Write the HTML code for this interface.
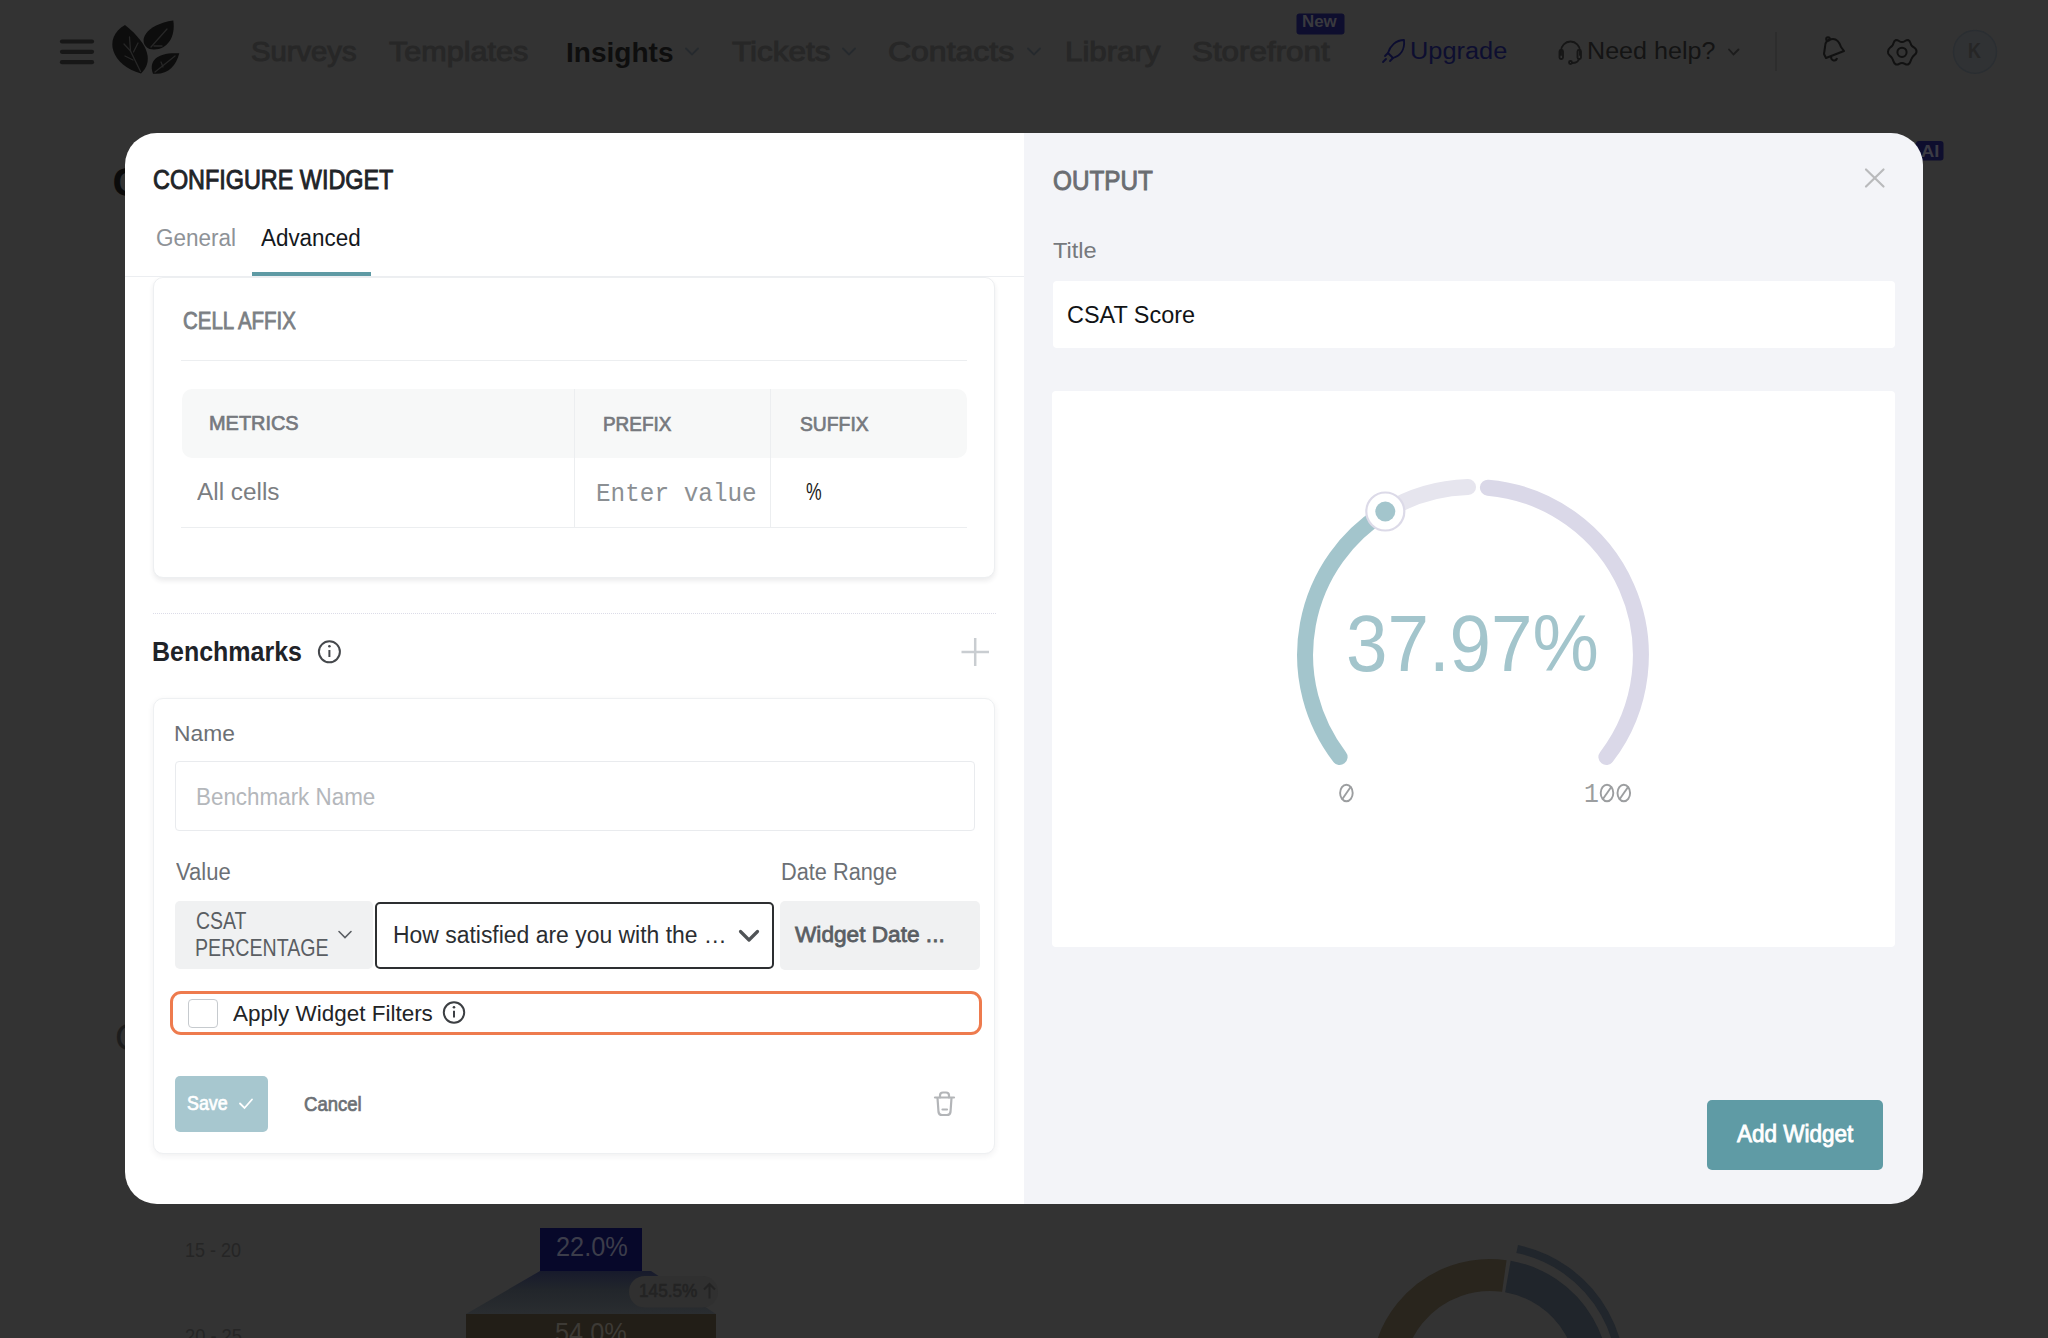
<!DOCTYPE html>
<html><head><meta charset="utf-8">
<style>
html,body{margin:0;padding:0;}
body{width:2048px;height:1338px;overflow:hidden;background:#333333;position:relative;font-family:"Liberation Sans",sans-serif;}
.a{position:absolute;box-sizing:border-box;}
.t{position:absolute;white-space:pre;line-height:1;transform-origin:0 0;}
svg{position:absolute;left:0;top:0;overflow:visible;}
</style></head><body>
<!-- background page (dimmed) -->
<svg width="2048" height="1338" viewBox="0 0 2048 1338">
  <!-- hamburger -->
  <g stroke="#171717" stroke-width="4.2" stroke-linecap="round">
    <line x1="62" y1="41.5" x2="92" y2="41.5"/>
    <line x1="62" y1="51.8" x2="92" y2="51.8"/>
    <line x1="62" y1="62.2" x2="92" y2="62.2"/>
  </g>
  <!-- logo leaves -->
  <g fill="#0d0d0d">
    <path d="M141 73.5 C112 66 102 38 125 25 C150 45 153 62 141 73.5Z"/>
    <path d="M149.5 49 C136 42 146 24 173.3 20.4 C176 38 166 52 149.5 49Z"/>
    <path d="M153 73.7 C148 60 158 52 179.3 53.3 C176 66 168 75 153 73.7Z"/>
  </g>
  <g stroke="#272727" stroke-width="1.3" fill="none" stroke-linecap="round">
    <path d="M140.5 71.5 L130.5 51 L129.5 37"/>
    <path d="M124 44 L130.5 51 M125 56 L133 60 M138 43 L133.5 52"/>
    <path d="M151 47 L167 29 M154 46 L162 46"/>
    <path d="M155 72 L175 56 M161 62 L163 67"/>
  </g>
  <!-- chevrons -->
  <g stroke="#262a2e" stroke-width="1.8" fill="none" stroke-linecap="round">
    <path d="M686 48.5 L692 54.5 L698 48.5"/>
    <path d="M843 48.5 L849 54.5 L855 48.5"/>
    <path d="M1028 48.5 L1034 54.5 L1040 48.5"/>
  </g>
  <path d="M1729 49.5 L1733.5 54.5 L1738.5 49.5" stroke="#1c1c1c" stroke-width="1.8" fill="none" stroke-linecap="round"/>
  <!-- new badge -->
  <rect x="1296.5" y="13.5" width="48" height="21" rx="3" fill="#0e0e2e"/>
  <!-- rocket -->
  <g stroke="#0c0d30" stroke-width="1.8" fill="none" stroke-linecap="round" stroke-linejoin="round">
    <path d="M1404 40 C1396 40 1390 46 1388 53 L1393 58 C1400 56 1405 50 1404 40Z"/>
    <path d="M1388 53 L1385 56 M1393 58 L1390 61 M1386 59 L1383 62"/>
  </g>
  <!-- headset -->
  <g stroke="#161616" stroke-width="1.8" fill="none" stroke-linecap="round">
    <path d="M1561 55 L1561 51 A9.5 9.5 0 0 1 1580 51 L1580 55"/>
    <rect x="1559.5" y="50" width="3.5" height="9" rx="1.5"/>
    <rect x="1577.5" y="50" width="3.5" height="9" rx="1.5"/>
    <path d="M1579 59 Q1578 63 1572 63"/>
    <circle cx="1570.5" cy="62.5" r="1.5"/>
  </g>
  <!-- divider -->
  <line x1="1776" y1="32" x2="1776" y2="71" stroke="#2b2b2b" stroke-width="1.2"/>
  <!-- bell -->
  <g stroke="#111111" stroke-width="2" fill="none" stroke-linejoin="round">
    <path d="M1826 58 L1844 51 L1841 47 C1839 41 1836 39 1833 39 C1829 39 1825 41 1825 47 L1824 54 Z"/>
    <path d="M1831 56.5 C1831 61 1836 62 1837 58"/>
    <circle cx="1828" cy="39" r="1.8"/>
  </g>
  <!-- gear -->
  <g stroke="#111111" stroke-width="2" fill="none">
    <path d="M1896 40 C1899 40 1899 42 1902 42 C1905 42 1905 40 1908 40 C1911 41 1910 44 1912 46 C1914 48 1917 48 1916.5 52 C1916 55 1913 55 1912 58 C1910 61 1911 63 1908 64.5 C1905 65 1905 63 1902 63 C1899 63 1899 65 1896 64.5 C1893 63 1894 61 1892 58 C1890 55 1887.5 55 1888 52 C1888 48 1890 48 1892 46 C1894 44 1893 41 1896 40Z"/>
    <circle cx="1902" cy="52.3" r="4.6"/>
  </g>
  <!-- avatar -->
  <circle cx="1975" cy="51.8" r="21.5" fill="#303234" stroke="#2a2e32" stroke-width="1.3"/>
  <!-- AI badge -->
  <rect x="1916" y="141" width="27.5" height="19.5" rx="3" fill="#0e0e2e"/>
  <!-- funnel -->
  <rect x="540" y="1228" width="102" height="43" fill="#07082a"/>
  <defs>
    <linearGradient id="trap" x1="0" y1="0" x2="0" y2="1">
      <stop offset="0" stop-color="#171a2c"/>
      <stop offset="0.45" stop-color="#22262b"/>
      <stop offset="1" stop-color="#2a2d30"/>
    </linearGradient>
  </defs>
  <path d="M540 1271 L651 1271 L716 1314 L466 1314 Z" fill="url(#trap)"/>
  <rect x="629" y="1276" width="89" height="31.5" rx="15.7" fill="#303030"/>
  <path d="M709.5 1298.5 L709.5 1284 M704 1289.5 L709.5 1284 L715 1289.5" stroke="#232323" stroke-width="2" fill="none"/>
  <rect x="466" y="1314" width="250" height="30" fill="#221e17"/>
  <!-- donut -->
  <path d="M1393.2 1413.2 A103 103 0 0 1 1504.3 1276" stroke="#29251d" stroke-width="32" fill="none"/>
  <path d="M1507.9 1276.5 A103 103 0 0 1 1586.8 1413.2" stroke="#20252b" stroke-width="32" fill="none"/>
  <path d="M1517.2 1249 A131 131 0 0 1 1613.1 1422.8" stroke="#21262c" stroke-width="8" fill="none"/>
</svg>

<div class="t" style="left:251.47px;top:37.48px;font-family:'Liberation Sans', sans-serif;font-weight:400;font-size:28.261px;-webkit-text-stroke:0.989px currentColor;color:#272727;transform:scaleX(1.0347)">Surveys</div>
<div class="t" style="left:388.50px;top:37.48px;font-family:'Liberation Sans', sans-serif;font-weight:400;font-size:28.261px;-webkit-text-stroke:0.989px currentColor;color:#272727;transform:scaleX(1.0814)">Templates</div>
<div class="t" style="left:566.21px;top:37.68px;font-family:'Liberation Sans', sans-serif;font-weight:700;font-size:28.261px;color:#0e0e0e;transform:scaleX(0.9933)">Insights</div>
<div class="t" style="left:732.00px;top:37.48px;font-family:'Liberation Sans', sans-serif;font-weight:400;font-size:28.261px;-webkit-text-stroke:0.989px currentColor;color:#272727;transform:scaleX(1.1136)">Tickets</div>
<div class="t" style="left:887.87px;top:37.48px;font-family:'Liberation Sans', sans-serif;font-weight:400;font-size:28.261px;-webkit-text-stroke:0.989px currentColor;color:#272727;transform:scaleX(1.1318)">Contacts</div>
<div class="t" style="left:1064.79px;top:37.48px;font-family:'Liberation Sans', sans-serif;font-weight:400;font-size:28.261px;-webkit-text-stroke:0.989px currentColor;color:#272727;transform:scaleX(1.1059)">Library</div>
<div class="t" style="left:1192.29px;top:37.48px;font-family:'Liberation Sans', sans-serif;font-weight:400;font-size:28.261px;-webkit-text-stroke:0.989px currentColor;color:#272727;transform:scaleX(1.1097)">Storefront</div>
<div class="t" style="left:1302.49px;top:14.43px;font-family:'Liberation Sans', sans-serif;font-weight:700;font-size:16.667px;color:#3a3a3e;transform:scaleX(1.0147)">New</div>
<div class="t" style="left:1409.94px;top:38.56px;font-family:'Liberation Sans', sans-serif;font-weight:400;font-size:24.638px;color:#0d0e30;transform:scaleX(1.0293)">Upgrade</div>
<div class="t" style="left:1586.90px;top:39.07px;font-family:'Liberation Sans', sans-serif;font-weight:400;font-size:23.913px;color:#141414;transform:scaleX(1.0500)">Need help?</div>
<div class="t" style="left:1968.20px;top:39.91px;font-family:'Liberation Sans', sans-serif;font-weight:700;font-size:22.464px;color:#262626;transform:scaleX(0.8000)">K</div>
<div class="t" style="left:112.40px;top:161.71px;font-family:'Liberation Sans', sans-serif;font-weight:700;font-size:40.580px;color:#0b0b0b;transform:scaleX(1.0000)">C</div>
<div class="t" style="left:114.90px;top:1018.77px;font-family:'Liberation Sans', sans-serif;font-weight:400;font-size:37.681px;color:#1d1d1d;transform:scaleX(1.0000)">C</div>
<div class="t" style="left:1921.00px;top:142.72px;font-family:'Liberation Sans', sans-serif;font-weight:700;font-size:17.391px;color:#3b3b44;transform:scaleX(1.0588)">AI</div>
<div class="t" style="left:184.78px;top:1240.87px;font-family:'Liberation Sans', sans-serif;font-weight:400;font-size:19.565px;color:#252525;transform:scaleX(0.9200)">15 - 20</div>
<div class="t" style="left:184.76px;top:1326.87px;font-family:'Liberation Sans', sans-serif;font-weight:400;font-size:19.565px;color:#252525;transform:scaleX(0.9356)">20 - 25</div>
<div class="t" style="left:555.68px;top:1232.59px;font-family:'Liberation Sans', sans-serif;font-weight:400;font-size:27.536px;color:#3c3d4a;transform:scaleX(0.9211)">22.0%</div>
<div class="t" style="left:555.08px;top:1318.59px;font-family:'Liberation Sans', sans-serif;font-weight:400;font-size:27.536px;color:#3d3a35;transform:scaleX(0.9211)">54.0%</div>
<div class="t" style="left:639.05px;top:1282.10px;font-family:'Liberation Sans', sans-serif;font-weight:400;font-size:18.116px;-webkit-text-stroke:0.634px currentColor;color:#232323;transform:scaleX(0.9500)">145.5%</div>
<!-- MODAL -->
<div class="a" style="left:125px;top:133px;width:899px;height:1071px;background:#ffffff;border-radius:32px 0 0 32px;"></div>
<div class="a" style="left:1024px;top:133px;width:898.5px;height:1071px;background:#f3f4f8;border-radius:0 32px 32px 0;"></div>

<!-- tabs -->
<div class="a" style="left:125px;top:276px;width:899px;height:1.2px;background:#eceef1;"></div>
<div class="a" style="left:252px;top:272px;width:119px;height:4px;background:#5e9aa4;"></div>

<!-- scroll area -->
<div class="a" style="left:125px;top:277px;width:899px;height:927px;overflow:hidden;">
  <!-- cell affix card -->
  <div class="a" style="left:28px;top:0px;width:842px;height:300.5px;border:1.2px solid #edeff1;border-radius:10px;box-shadow:0 3px 5px rgba(40,40,60,0.09);background:#fff;"></div>
  <div class="a" style="left:56px;top:82.5px;width:786px;height:1.2px;background:#eceef0;"></div>
  <div class="a" style="left:57px;top:112px;width:785px;height:69px;background:#f7f8f8;border-radius:10px;"></div>
  <div class="a" style="left:449px;top:112px;width:1.2px;height:139px;background:#eceef0;"></div>
  <div class="a" style="left:645px;top:112px;width:1.2px;height:139px;background:#eceef0;"></div>
  <div class="a" style="left:56px;top:250px;width:786px;height:1.2px;background:#eceef0;"></div>
  <!-- dotted divider -->
  <div class="a" style="left:28px;top:336px;width:843px;height:0;border-top:1.5px dotted #dcdce8;"></div>
  <!-- benchmark card -->
  <div class="a" style="left:28px;top:421px;width:842px;height:456px;border:1.2px solid #eef0f2;border-radius:10px;box-shadow:0 2px 6px rgba(40,40,60,0.07);background:#fff;"></div>
  <!-- name input -->
  <div class="a" style="left:50px;top:484px;width:800px;height:69.5px;border:1.2px solid #e9ebee;border-radius:4px;"></div>
  <!-- csat select -->
  <div class="a" style="left:50px;top:624px;width:198px;height:68px;background:#f0f1f2;border-radius:5px;"></div>
  <!-- how satisfied -->
  <div class="a" style="left:249.5px;top:624.5px;width:399px;height:67px;border:2px solid #2d2f31;border-radius:5px;background:#fff;"></div>
  <!-- widget date -->
  <div class="a" style="left:655px;top:624px;width:199.5px;height:68.5px;background:#f0f1f2;border-radius:5px;"></div>
  <!-- orange -->
  <div class="a" style="left:44.5px;top:713.5px;width:812px;height:44.5px;border:3.5px solid #ee7b4e;border-radius:11px;"></div>
  <div class="a" style="left:63px;top:722px;width:29.5px;height:29px;border:1.2px solid #c6cace;border-radius:4px;background:#fff;"></div>
  <!-- save -->
  <div class="a" style="left:50px;top:799px;width:93px;height:55.5px;background:#a7c7cf;border-radius:5px;"></div>
</div>

<svg width="2048" height="1338" viewBox="0 0 2048 1338">
  <!-- info icons -->
  <g stroke="#45484c" stroke-width="2" fill="none">
    <circle cx="329.4" cy="651.8" r="10.5"/>
    <line x1="329.4" y1="650" x2="329.4" y2="657"/>
  </g>
  <circle cx="329.4" cy="646.3" r="1.3" fill="#45484c"/>
  <g stroke="#3c3f43" stroke-width="2" fill="none">
    <circle cx="454" cy="1012.5" r="10.2"/>
    <line x1="454" y1="1010.8" x2="454" y2="1017.5"/>
  </g>
  <circle cx="454" cy="1007.2" r="1.3" fill="#3c3f43"/>
  <!-- plus -->
  <g stroke="#c9cdd1" stroke-width="2.5">
    <line x1="975.2" y1="638" x2="975.2" y2="666"/>
    <line x1="961.5" y1="652" x2="989" y2="652"/>
  </g>
  <!-- csat chevron -->
  <path d="M339 931.5 L345 937.5 L351 931.5" stroke="#5a5e63" stroke-width="1.6" fill="none" stroke-linecap="round"/>
  <!-- how chevron bold -->
  <path d="M740.5 931.5 L749 940 L757.5 931.5" stroke="#505356" stroke-width="3.2" fill="none" stroke-linecap="round" stroke-linejoin="round"/>
  <!-- save check -->
  <path d="M240 1103.5 L244.5 1108 L252 1099.5" stroke="#ffffff" stroke-width="1.8" fill="none" stroke-linecap="round"/>
  <!-- trash -->
  <g stroke="#b3b5b8" stroke-width="2.2" fill="none" stroke-linecap="round" stroke-linejoin="round">
    <path d="M935 1097.5 L954 1097.5"/>
    <path d="M940 1097.5 L940 1095.5 Q940 1092.5 943 1092.5 L946 1092.5 Q949 1092.5 949 1095.5 L949 1097.5"/>
    <path d="M937.5 1098 L938.5 1112 Q939 1115 942 1115 L947 1115 Q950 1115 950.5 1112 L951.5 1098"/>
    <path d="M942.5 1109.5 L947 1109.5"/>
  </g>
  <!-- close X -->
  <g stroke="#b9babc" stroke-width="2.2" stroke-linecap="round">
    <line x1="1866" y1="169.5" x2="1883.5" y2="186.5"/>
    <line x1="1883.5" y1="169.5" x2="1866" y2="186.5"/>
  </g>
</svg>

<!-- right panel boxes -->
<div class="a" style="left:1053px;top:281px;width:842px;height:67px;background:#ffffff;border-radius:4px;"></div>
<div class="a" style="left:1052px;top:391px;width:843px;height:555.5px;background:#ffffff;border-radius:4px;"></div>
<div class="a" style="left:1707px;top:1099.5px;width:176px;height:70px;background:#5f9ba5;border-radius:5px;"></div>

<svg width="2048" height="1338" viewBox="0 0 2048 1338">
  <g fill="none" stroke-linecap="round" stroke-width="16">
    <path d="M1339.6 757 A168 168 0 0 1 1385.3 511.7" stroke="#a3c5cc"/>
    <path d="M1385.3 511.7 A168 168 0 0 1 1468 487.1" stroke="#e6e5ee"/>
    <path d="M1487.9 487.7 A168 168 0 0 1 1606.4 757" stroke="#dad8e8"/>
  </g>
  <circle cx="1385.3" cy="511.5" r="19" fill="#ffffff" stroke="#dcdae8" stroke-width="2.2"/>
  <circle cx="1385.3" cy="511.5" r="10" fill="#a3c5cc"/>
  <g stroke="#9c9ea0" stroke-width="1.9" fill="none">
    <ellipse cx="1346.4" cy="793" rx="6.3" ry="8.3"/>
    <line x1="1342" y1="799.5" x2="1351" y2="786.5"/>
    <ellipse cx="1607" cy="793" rx="6.3" ry="8.3"/>
    <line x1="1602.6" y1="799.5" x2="1611.6" y2="786.5"/>
    <ellipse cx="1623.8" cy="793" rx="6.3" ry="8.3"/>
    <line x1="1619.4" y1="799.5" x2="1628.4" y2="786.5"/>
  </g>
</svg>

<div class="t" style="left:153.13px;top:167.21px;font-family:'Liberation Sans', sans-serif;font-weight:400;font-size:26.812px;-webkit-text-stroke:0.938px currentColor;color:#1f2428;transform:scaleX(0.8727)">CONFIGURE WIDGET</div>
<div class="t" style="left:155.56px;top:225.87px;font-family:'Liberation Sans', sans-serif;font-weight:400;font-size:23.913px;color:#8e9297;transform:scaleX(0.9410)">General</div>
<div class="t" style="left:261.20px;top:225.87px;font-family:'Liberation Sans', sans-serif;font-weight:400;font-size:23.913px;color:#14181c;transform:scaleX(0.9371)">Advanced</div>
<div class="t" style="left:182.50px;top:310.29px;font-family:'Liberation Sans', sans-serif;font-weight:400;font-size:23.188px;-webkit-text-stroke:0.812px currentColor;color:#7b7f84;transform:scaleX(0.8828)">CELL AFFIX</div>
<div class="t" style="left:209.22px;top:413.05px;font-family:'Liberation Sans', sans-serif;font-weight:400;font-size:20.290px;-webkit-text-stroke:0.710px currentColor;color:#76797e;transform:scaleX(0.9822)">METRICS</div>
<div class="t" style="left:602.67px;top:413.55px;font-family:'Liberation Sans', sans-serif;font-weight:400;font-size:20.290px;-webkit-text-stroke:0.710px currentColor;color:#76797e;transform:scaleX(0.9329)">PREFIX</div>
<div class="t" style="left:800.20px;top:413.55px;font-family:'Liberation Sans', sans-serif;font-weight:400;font-size:20.290px;-webkit-text-stroke:0.710px currentColor;color:#76797e;transform:scaleX(0.9514)">SUFFIX</div>
<div class="t" style="left:196.60px;top:479.96px;font-family:'Liberation Sans', sans-serif;font-weight:400;font-size:24.638px;color:#7b7e82;transform:scaleX(0.9880)">All cells</div>
<div class="t" style="left:595.71px;top:481.82px;font-family:'Liberation Mono', monospace;font-weight:400;font-size:25.758px;color:#8b8f93;transform:scaleX(0.9455)">Enter value</div>
<div class="t" style="left:805.99px;top:480.46px;font-family:'Liberation Sans', sans-serif;font-weight:400;font-size:24.638px;color:#1a1a1a;transform:scaleX(0.7150)">%</div>
<div class="t" style="left:152.40px;top:637.75px;font-family:'Liberation Sans', sans-serif;font-weight:700;font-size:27.826px;color:#1f2328;transform:scaleX(0.8982)">Benchmarks</div>
<div class="t" style="left:173.85px;top:723.13px;font-family:'Liberation Sans', sans-serif;font-weight:400;font-size:22.319px;color:#6c7075;transform:scaleX(1.0228)">Name</div>
<div class="t" style="left:195.64px;top:784.85px;font-family:'Liberation Sans', sans-serif;font-weight:400;font-size:24.058px;color:#b4b7bb;transform:scaleX(0.9316)">Benchmark Name</div>
<div class="t" style="left:175.50px;top:861.42px;font-family:'Liberation Sans', sans-serif;font-weight:400;font-size:23.623px;color:#6c7075;transform:scaleX(0.9328)">Value</div>
<div class="t" style="left:780.76px;top:861.17px;font-family:'Liberation Sans', sans-serif;font-weight:400;font-size:23.623px;color:#6c7075;transform:scaleX(0.9211)">Date Range</div>
<div class="t" style="left:195.56px;top:909.59px;font-family:'Liberation Sans', sans-serif;font-weight:400;font-size:23.188px;color:#5a5e63;transform:scaleX(0.8407)">CSAT</div>
<div class="t" style="left:194.71px;top:937.39px;font-family:'Liberation Sans', sans-serif;font-weight:400;font-size:23.188px;color:#5a5e63;transform:scaleX(0.8465)">PERCENTAGE</div>
<div class="t" style="left:392.62px;top:924.19px;font-family:'Liberation Sans', sans-serif;font-weight:400;font-size:23.188px;color:#2a2d31;transform:scaleX(0.9892)">How satisfied are you with the …</div>
<div class="t" style="left:795.30px;top:923.34px;font-family:'Liberation Sans', sans-serif;font-weight:400;font-size:22.899px;-webkit-text-stroke:0.801px currentColor;color:#5a5e63;transform:scaleX(0.9897)">Widget Date ...</div>
<div class="t" style="left:232.70px;top:1002.83px;font-family:'Liberation Sans', sans-serif;font-weight:400;font-size:22.319px;color:#222426;transform:scaleX(1.0081)">Apply Widget Filters</div>
<div class="t" style="left:186.90px;top:1094.17px;font-family:'Liberation Sans', sans-serif;font-weight:400;font-size:19.565px;-webkit-text-stroke:0.685px currentColor;color:#ffffff;transform:scaleX(0.9133)">Save</div>
<div class="t" style="left:304.10px;top:1093.55px;font-family:'Liberation Sans', sans-serif;font-weight:400;font-size:20.290px;-webkit-text-stroke:0.710px currentColor;color:#6c7075;transform:scaleX(0.9143)">Cancel</div>
<div class="t" style="left:1052.90px;top:167.71px;font-family:'Liberation Sans', sans-serif;font-weight:400;font-size:26.812px;-webkit-text-stroke:0.938px currentColor;color:#6a6d72;transform:scaleX(0.9073)">OUTPUT</div>
<div class="t" style="left:1052.90px;top:238.96px;font-family:'Liberation Sans', sans-serif;font-weight:400;font-size:22.754px;color:#76797d;transform:scaleX(1.0381)">Title</div>
<div class="t" style="left:1067.05px;top:303.06px;font-family:'Liberation Sans', sans-serif;font-weight:400;font-size:24.638px;color:#111315;transform:scaleX(0.9519)">CSAT Score</div>
<div class="t" style="left:1346.19px;top:603.95px;font-family:'Liberation Sans', sans-serif;font-weight:400;font-size:79.710px;color:#a3c5cc;transform:scaleX(0.9351)">37.97%</div>
<div class="t" style="left:1584.00px;top:781.04px;font-family:'Liberation Mono', monospace;font-weight:400;font-size:27.576px;color:#9c9ea0;transform:scaleX(0.9000)">1</div>
<div class="t" style="left:1737.11px;top:1121.86px;font-family:'Liberation Sans', sans-serif;font-weight:400;font-size:24.638px;-webkit-text-stroke:0.862px currentColor;color:#ffffff;transform:scaleX(0.9140)">Add Widget</div>
</body></html>
